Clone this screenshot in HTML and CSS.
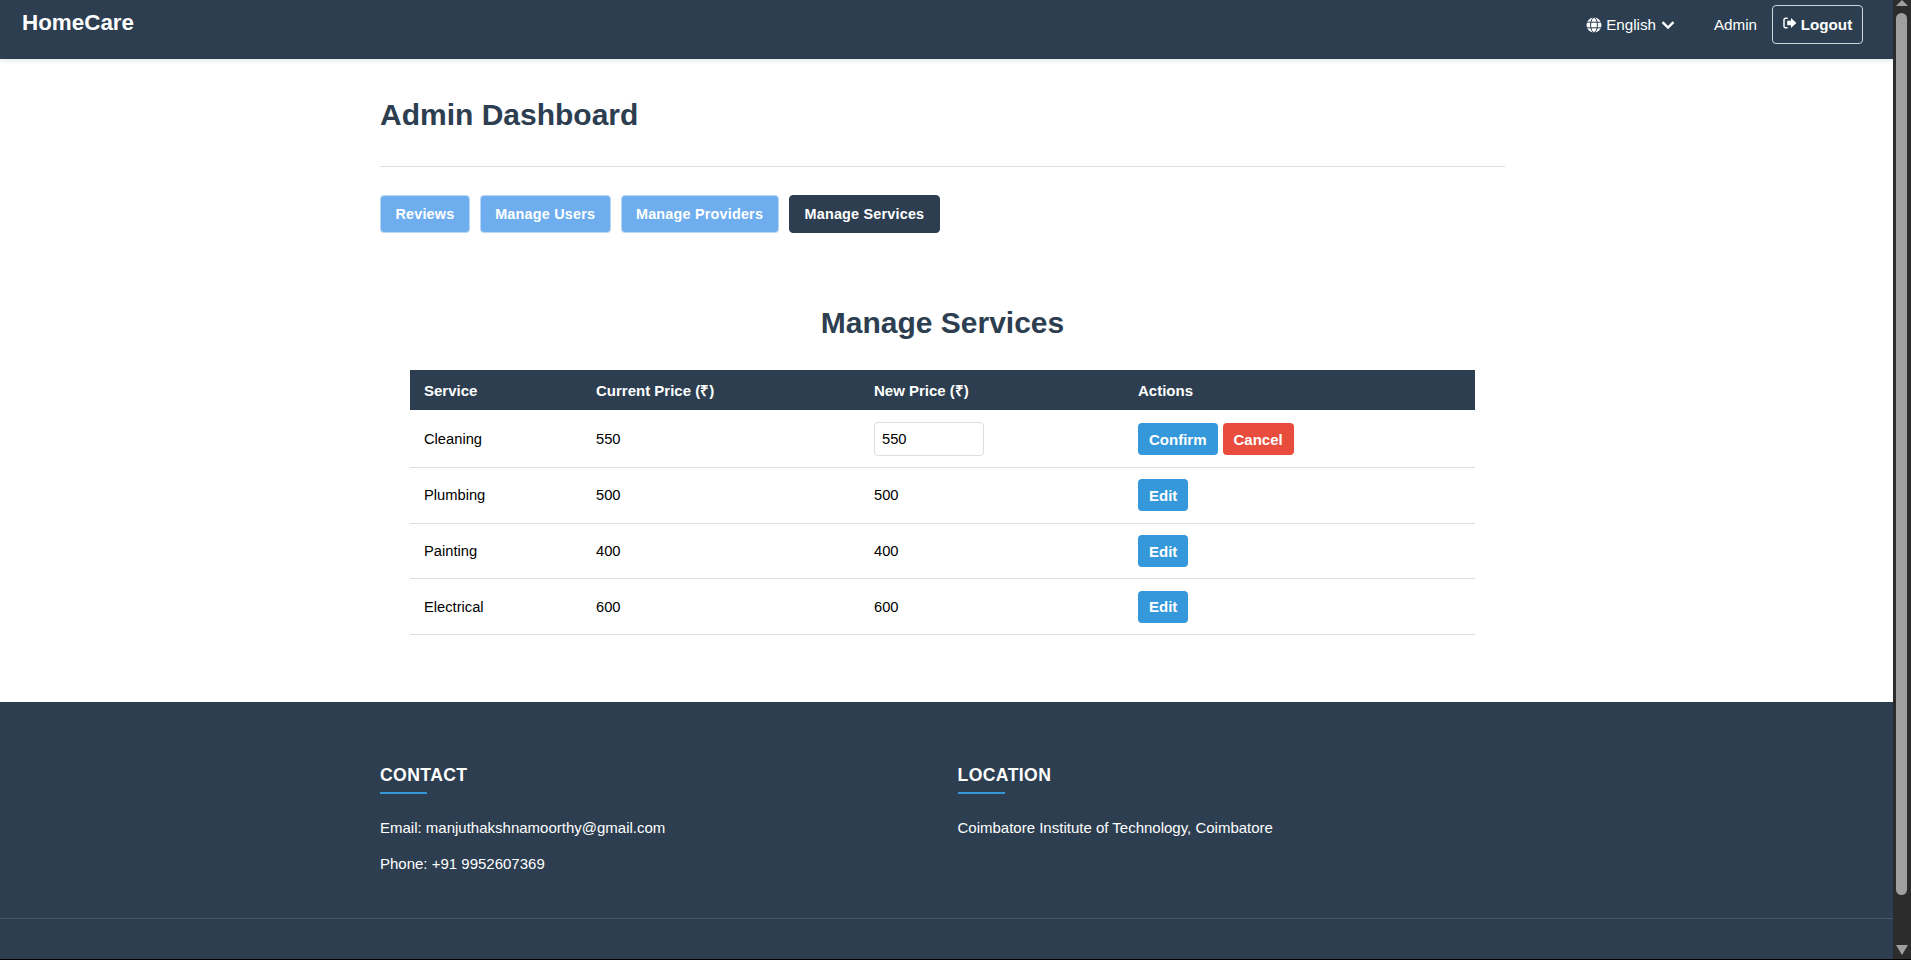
FILE: index.html
```html
<!DOCTYPE html>
<html lang="en">
<head>
<meta charset="utf-8">
<title>HomeCare</title>
<link rel="stylesheet" href="styles.css">
</head>
<body>
<header class="topbar">
  <div class="logo">HomeCare</div>
  <nav class="topnav">
    <div class="lang">
      <svg class="globe" viewBox="0 0 16 16" aria-hidden="true"><circle cx="8" cy="8" r="7.5" fill="#fff"/><g fill="none" stroke="#2c3e50" stroke-width="1"><ellipse cx="8" cy="8" rx="3.4" ry="7.5"/><path d="M0.6 5.2h14.8M0.6 10.8h14.8"/></g></svg>
      <span>English</span>
      <svg class="chev" viewBox="0 0 14 10" aria-hidden="true"><path d="M1.5 2.2 7 7.6l5.5-5.4" fill="none" stroke="#fff" stroke-width="2.4"/></svg>
    </div>
    <span class="user">Admin</span>
    <button class="logout">
      <svg class="out" viewBox="0 0 14 12" aria-hidden="true"><path d="M4.6 1.2H2.6A1.6 1.6 0 0 0 1 2.8v6.4a1.6 1.6 0 0 0 1.6 1.6h2" fill="none" stroke="#fff" stroke-width="1.5"/><path d="M8 1 13.4 6 8 11V8.2H4.2V3.8H8z" fill="#fff"/></svg>
      <span>Logout</span>
    </button>
  </nav>
</header>

<div class="wrap">
  <main class="container">
    <h1 class="page-title">Admin Dashboard</h1>
    <div class="tabs">
      <button class="tab">Reviews</button>
      <button class="tab">Manage Users</button>
      <button class="tab">Manage Providers</button>
      <button class="tab tab-active">Manage Services</button>
    </div>
    <section class="panel">
      <h2 class="panel-title">Manage Services</h2>
      <table class="svc">
        <thead>
          <tr><th class="c1">Service</th><th class="c2">Current Price (₹)</th><th class="c3">New Price (₹)</th><th>Actions</th></tr>
        </thead>
        <tbody>
          <tr class="first"><td>Cleaning</td><td>550</td><td><input class="price" type="text" value="550"></td><td><div class="acts"><button class="btn">Confirm</button><button class="btn btn-red">Cancel</button></div></td></tr>
          <tr><td>Plumbing</td><td>500</td><td>500</td><td><div class="acts"><button class="btn">Edit</button></div></td></tr>
          <tr><td>Painting</td><td>400</td><td>400</td><td><div class="acts"><button class="btn">Edit</button></div></td></tr>
          <tr><td>Electrical</td><td>600</td><td>600</td><td><div class="acts"><button class="btn">Edit</button></div></td></tr>
        </tbody>
      </table>
    </section>
  </main>
</div>

<footer class="foot">
  <div class="wrap">
    <div class="foot-grid">
      <div>
        <h3 class="foot-h">CONTACT</h3>
        <p class="foot-p">Email: manjuthakshnamoorthy@gmail.com</p>
        <p class="foot-p">Phone: +91 9952607369</p>
      </div>
      <div>
        <h3 class="foot-h">LOCATION</h3>
        <p class="foot-p">Coimbatore Institute of Technology, Coimbatore</p>
      </div>
    </div>
  </div>
  <div class="foot-rule"></div>
</footer>

<aside class="sbar" aria-hidden="true">
  <div class="sbar-up"></div>
  <div class="sbar-thumb"></div>
  <div class="sbar-down"></div>
</aside>
<div class="edge"></div>
</body>
</html>
```

FILE: styles.css
```css
* { box-sizing: border-box; }
body { margin: 0; padding-right: 18px; font-family: "Liberation Sans", Arial, sans-serif; color: #000; background: #fff; }
button { font-family: inherit; cursor: pointer; }

.sbar {
  position: fixed; top: 0; right: 0; bottom: 0; width: 18px;
  display: flex; flex-direction: column; align-items: center;
  background: #2c2c2c;
}
.sbar-up { width: 12px; height: 6px; margin-bottom: 7px; background: #9f9f9f; clip-path: polygon(50% 0, 100% 100%, 0 100%); }
.sbar-thumb { width: 11px; height: 882px; margin-left: -1px; border-radius: 6px; background: #9f9f9f; }
.sbar-down { width: 12px; height: 10px; margin-top: 50px; background: #9f9f9f; clip-path: polygon(0 0, 100% 0, 50% 100%); }

.topbar {
  display: flex; justify-content: space-between; align-items: flex-start;
  height: 59px; padding: 5px 30px 0 22px;
  background: #2c3e50; color: #fff;
  box-shadow: 0 2px 4px rgba(44, 62, 80, .12);
  position: relative;
}
.logo { font-size: 22.4px; font-weight: 700; line-height: 36px; }
.topnav { display: flex; align-items: center; height: 39px; }
.lang { display: flex; align-items: center; font-size: 15.2px; }
.globe { width: 16px; height: 16px; margin-right: 4px; }
.chev { width: 14px; height: 10px; margin-left: 5px; }
.user { font-size: 15.2px; margin-left: 39px; }
.logout {
  display: flex; align-items: center; justify-content: center;
  width: 91px; height: 39px; margin-left: 15px; padding: 0;
  border: 1px solid #cfd6dc; border-radius: 4px;
  background: transparent; color: #fff; font-size: 15.2px; font-weight: 700;
}
.out { width: 14px; height: 12px; margin-right: 4px; margin-top: -4px; }

.wrap { padding-right: 8px; }
.container { width: 1125px; margin: 0 auto; }
.page-title {
  margin: 0; padding: 37px 0 24px; height: 108px;
  border-bottom: 1px solid #ddd;
  font-size: 30px; line-height: 37px; font-weight: 700; color: #2c3e50;
}
.tabs { display: flex; gap: 10px; margin-top: 28px; }
.tab {
  height: 38px; padding: 0 14.4px;
  border: 1px solid #b9d6f5; border-radius: 4px;
  background: #6eaeef; color: #fff;
  font-size: 14.4px; font-weight: 700; letter-spacing: .2px;
}
.tab-active { padding: 0 15px; background: #2c3e50; border-color: #2c3e50; }

.panel { padding: 0 30px 67px; }
.panel-title {
  margin: 72px 0 0; height: 65px;
  text-align: center; font-size: 30px; line-height: 35px; font-weight: 700; color: #2c3e50;
}
.svc { width: 100%; border-collapse: collapse; table-layout: fixed; font-size: 14.7px; }
.svc th {
  height: 40px; padding: 0 14px; text-align: left;
  background: #2c3e50; color: #fff; font-size: 15px; font-weight: 700;
}
.c1 { width: 172px; }
.c2 { width: 278px; }
.c3 { width: 264px; }
.svc td { height: 55.7px; padding: 0 14px; border-bottom: 1px solid #ddd; }
.first td { height: 57.5px; padding-top: 1px; }
.price {
  display: block; width: 110px; height: 34px; padding: 0 7px;
  border: 1px solid #ddd; border-radius: 4px;
  font-family: inherit; font-size: 14.7px; color: #000; background: #fff;
}
.acts { display: flex; gap: 5px; }
.btn {
  height: 32px; padding: 0 11px;
  border: 0; border-radius: 4px;
  background: #3498db; color: #fff; font-size: 15px; font-weight: 700;
}
.btn-red { background: #e74c3c; }

.foot { height: 315px; background: #2c3e50; color: #fff; }
.foot-grid { display: grid; grid-template-columns: 1fr 1fr; gap: 30px; width: 1125px; margin: 0 auto; padding-top: 63px; height: 216px; }
.foot-h {
  position: relative; margin: 0 0 26px; padding-bottom: 8px;
  font-size: 17.6px; line-height: 20px; letter-spacing: .4px; font-weight: 700;
}
.foot-h::after { content: ""; position: absolute; left: 0; bottom: -1px; width: 47px; height: 2px; background: #3498db; }
.foot-p { margin: 0 0 19px; font-size: 15px; line-height: 17px; }
.foot-rule { height: 1px; background: #445667; }
.edge { position: fixed; left: 0; right: 0; bottom: 0; height: 1px; background: #000; }
```
